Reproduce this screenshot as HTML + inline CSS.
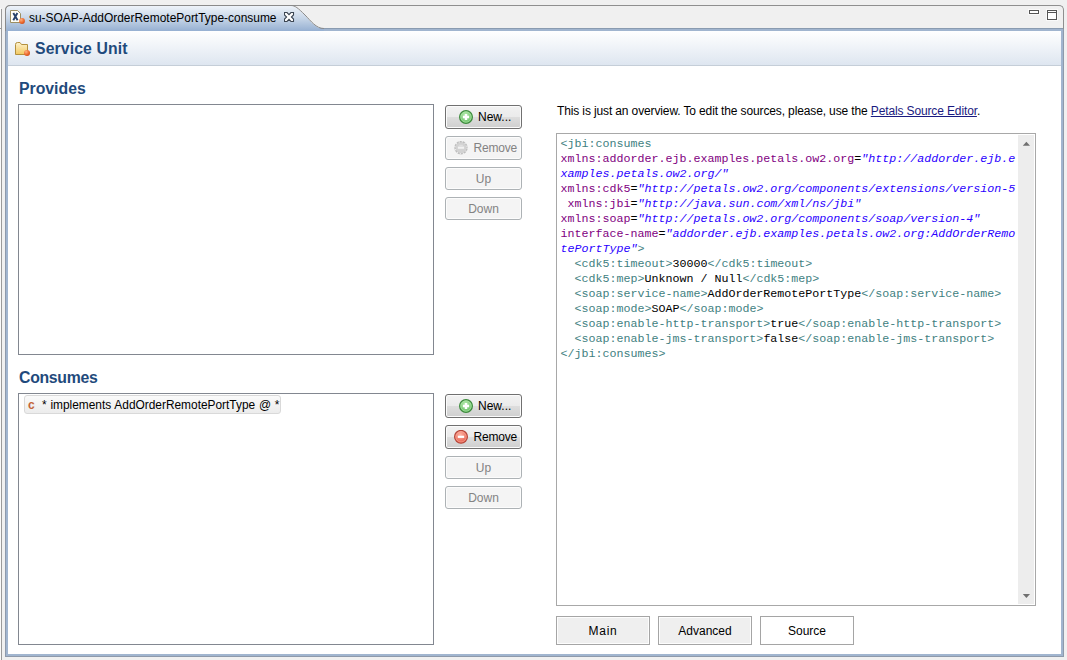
<!DOCTYPE html>
<html><head><meta charset="utf-8">
<style>
*{box-sizing:border-box;margin:0;padding:0}
html,body{width:1067px;height:660px;overflow:hidden;background:#f0f0f0;font-family:"Liberation Sans",sans-serif;position:relative}
.a{position:absolute}
.t{position:absolute;white-space:pre;font-family:"Liberation Sans",sans-serif;color:#000}
.btn{position:absolute;border:1px solid #707070;border-radius:3px;background:linear-gradient(#f2f2f2 0%,#ebebeb 48%,#dddddd 52%,#cfcfcf 100%);box-shadow:inset 0 0 0 1px #fbfbfb}
.btn.dis{border-color:#adb2b5;background:#f4f4f4;box-shadow:inset 0 0 0 1px #fcfcfc}
.bl{position:absolute;white-space:pre;font-size:12px;line-height:14px;color:#000}
.dis .bl{color:#838383}
.list{position:absolute;border:1px solid #828790;background:#fff}
.code{position:absolute;font-family:"Liberation Mono",monospace;font-size:11.67px;line-height:15px;white-space:pre;color:#000}
.tg{color:#3f7f7f}.an{color:#7f007f}.av{color:#2a00ff;font-style:italic}
.tab2{position:absolute;top:616px;width:94px;height:29px;border:1px solid #a5a5a5;background:#efefef;box-shadow:inset 0 0 0 1px #fdfdfd}
.tab2 span{position:absolute;left:0;right:0;top:7px;text-align:center;font-size:12px;line-height:14px;color:#000}
</style></head><body>

<svg width="0" height="0" style="position:absolute"><defs>
<radialGradient id="od" cx="0.35" cy="0.3" r="0.8"><stop offset="0" stop-color="#ffb080"/><stop offset="0.6" stop-color="#ec6a2c"/><stop offset="1" stop-color="#c8481a"/></radialGradient>
<radialGradient id="gg" cx="0.45" cy="0.35" r="0.7"><stop offset="0" stop-color="#b8ecb0"/><stop offset="1" stop-color="#5cb85a"/></radialGradient>
<radialGradient id="rg" cx="0.45" cy="0.35" r="0.7"><stop offset="0" stop-color="#ffb4a4"/><stop offset="1" stop-color="#e2503e"/></radialGradient>
<linearGradient id="fd" x1="0" y1="0" x2="0" y2="1"><stop offset="0" stop-color="#fdf3cf"/><stop offset="1" stop-color="#f2c860"/></linearGradient>
</defs></svg>
<!-- left neighbour edge -->
<div class="a" style="left:0;top:8px;width:1px;height:652px;background:#fafafa"></div>
<div class="a" style="left:1px;top:9px;width:1px;height:651px;background:#9a9a9a"></div>
<div class="a" style="left:0;top:28px;width:1px;height:1px;background:#9a9a9a"></div>

<!-- folder frame -->
<div class="a" style="left:5px;top:5px;width:1059px;height:652px;border:1px solid #8f8f8f;border-bottom-color:#8e9aab;border-radius:5px 5px 0 0;background:#f0f0f0"></div>
<div class="a" style="left:5px;top:29px;width:1px;height:628px;background:#8e9aab"></div><div class="a" style="left:1063px;top:29px;width:1px;height:628px;background:#8e9aab"></div>
<div class="a" style="left:6px;top:28px;width:1057px;height:1px;background:#8a9bb0"></div>
<div class="a" style="left:6px;top:29px;width:1057px;height:627px;background:#a1b5cf"></div>
<div class="a" style="left:8px;top:31px;width:1053px;height:623px;background:#fff"></div>

<!-- selected tab -->
<svg class="a" style="left:0;top:0" width="400" height="32">
<defs><linearGradient id="tg" x1="0" y1="0" x2="0" y2="1">
<stop offset="0" stop-color="#eef3f9"/><stop offset="0.5" stop-color="#c6d5e7"/><stop offset="1" stop-color="#96b0d2"/></linearGradient></defs>
<path d="M6,31 L6,11 Q6,6 11,6 L291,6 C295,6 298,8.5 305,15.5 C311,21.5 316,29 324,29 L324,31 Z" fill="url(#tg)"/>
<path d="M5.5,31 L5.5,10.5 Q5.5,5.5 10.5,5.5 L291,5.5 C295,5.5 298,8 305,15 C311,21 316,28.5 324,28.5" fill="none" stroke="#8a8a8a" stroke-width="1"/>
</svg>
<!-- tab icon -->
<svg class="a" style="left:9px;top:9px" width="18" height="17">
<path d="M1.5,1.5 L8.5,1.5 L11.5,4.5 L11.5,13.5 L1.5,13.5 Z" fill="#fffef6" stroke="#9c8f62"/>
<path d="M4.3,4 L8.6,11.2 M8.4,4 L4.3,11.2" stroke="#27416a" stroke-width="1.9"/>
<circle cx="13" cy="12" r="2.9" fill="url(#od)"/>
</svg>
<div class="t" style="left:29px;top:10px;font-size:11.95px;line-height:16px">su-SOAP-AddOrderRemotePortType-consume</div>
<!-- close X -->
<svg class="a" style="left:284px;top:12px" width="11" height="11">
<path d="M0.5,0.5 L3,0.5 L5,2.6 L7,0.5 L9.5,0.5 L9.5,3 L7.4,5 L9.5,7 L9.5,9.5 L7,9.5 L5,7.4 L3,9.5 L0.5,9.5 L0.5,7 L2.6,5 L0.5,3 Z" fill="#fff" stroke="#3c4652" stroke-width="1.1"/>
</svg>
<!-- min / max -->
<div class="a" style="left:1029px;top:10px;width:10px;height:4px;border:1px solid #555;background:#fff;box-shadow:0 0 0 1px rgba(255,255,255,.6)"></div>
<div class="a" style="left:1047px;top:10px;width:10px;height:10px;border:1px solid #555;background:#fff;box-shadow:0 0 0 1px rgba(255,255,255,.6)"></div><div class="a" style="left:1048px;top:12px;width:8px;height:1px;background:#555"></div>

<!-- header -->
<div class="a" style="left:8px;top:31px;width:1053px;height:34px;background:linear-gradient(#ffffff,#dee6f0)"></div>
<div class="a" style="left:8px;top:65px;width:1053px;height:1px;background:#c5ced8"></div>
<svg class="a" style="left:14px;top:41px" width="18" height="17">
<path d="M1.5,3.5 Q1.5,1.5 3.5,1.5 L6,1.5 L7.5,3.5 L13.5,3.5 L13.5,13.5 L1.5,13.5 Z" fill="url(#fd)" stroke="#b3903e"/>
<circle cx="13" cy="12" r="3" fill="url(#od)"/>
</svg>
<div class="t" style="left:35px;top:39.5px;font-size:15.8px;line-height:18px;letter-spacing:0.1px;font-weight:bold;color:#1f4a7c">Service Unit</div>

<!-- Provides -->
<div class="t" style="left:19px;top:79.5px;font-size:15.8px;line-height:18px;letter-spacing:0px;font-weight:bold;color:#1f4a7c">Provides</div>
<div class="list" style="left:18px;top:104px;width:416px;height:251px"></div>

<div class="btn" style="left:445px;top:105px;width:77px;height:24px">
<svg class="a" style="left:13px;top:4px" width="16" height="16"><circle cx="7" cy="7" r="6.4" fill="url(#gg)" stroke="#3f8a3f" stroke-width="1.2"/><circle cx="7" cy="7" r="5.2" fill="none" stroke="#b8ecb0" stroke-width="0.8" opacity="0.7"/><path d="M3.9,7 H10.1 M7,3.9 V10.1" stroke="#fff" stroke-width="2.4"/></svg>
<div class="bl" style="left:32px;top:4px">New...</div></div>
<div class="btn dis" style="left:445px;top:136px;width:77px;height:24px">
<svg class="a" style="left:8px;top:4px" width="16" height="16"><circle cx="7" cy="6.7" r="6.1" fill="#d2d2d2" stroke="#bdbdbd" stroke-width="1.3"/><circle cx="7" cy="6.7" r="6.1" fill="none" stroke="#f4f4f4" stroke-width="1.4" stroke-dasharray="1 2.2"/><path d="M3.9,6.7 H10.1" stroke="#f2f2f2" stroke-width="2.2"/><path d="M5.2,4.3 H8.8" stroke="#e4e4e4" stroke-width="0.9"/></svg>
<div class="bl" style="left:27.5px;top:4px;letter-spacing:-0.22px">Remove</div></div>
<div class="btn dis" style="left:445px;top:167px;width:77px;height:23px"><div class="bl" style="left:0;right:0;text-align:center;top:4px">Up</div></div>
<div class="btn dis" style="left:445px;top:197px;width:77px;height:23px"><div class="bl" style="left:0;right:0;text-align:center;top:4px">Down</div></div>

<!-- Consumes -->
<div class="t" style="left:19px;top:368.5px;font-size:15.8px;line-height:18px;letter-spacing:-0.28px;font-weight:bold;color:#1f4a7c">Consumes</div>
<div class="list" style="left:18px;top:393px;width:416px;height:252px"></div>
<div class="a" style="left:24px;top:395px;width:257px;height:19px;border:1px solid #d9d9d9;border-radius:3px;background:linear-gradient(#fafafa,#ececec)"></div>
<div class="t" style="left:28px;top:398px;font-size:12px;line-height:14px;font-weight:bold;color:#c4643a">c</div>
<div class="t" style="left:42px;top:398px;font-size:11.9px;word-spacing:0.5px;line-height:14px">* implements AddOrderRemotePortType @ *</div>

<div class="btn" style="left:445px;top:394px;width:77px;height:24px">
<svg class="a" style="left:13px;top:4px" width="16" height="16"><circle cx="7" cy="7" r="6.4" fill="url(#gg)" stroke="#3f8a3f" stroke-width="1.2"/><circle cx="7" cy="7" r="5.2" fill="none" stroke="#b8ecb0" stroke-width="0.8" opacity="0.7"/><path d="M3.9,7 H10.1 M7,3.9 V10.1" stroke="#fff" stroke-width="2.4"/></svg>
<div class="bl" style="left:32px;top:4px">New...</div></div>
<div class="btn" style="left:445px;top:425px;width:77px;height:24px">
<svg class="a" style="left:8px;top:4px" width="16" height="16"><circle cx="7" cy="6.8" r="6.4" fill="url(#rg)" stroke="#b4463a" stroke-width="1.2"/><circle cx="7" cy="6.8" r="5.2" fill="none" stroke="#ffc0b0" stroke-width="0.8" opacity="0.6"/><path d="M3.8,6.8 H10.2" stroke="#fff" stroke-width="2.2"/></svg>
<div class="bl" style="left:27.5px;top:4px;letter-spacing:-0.22px">Remove</div></div>
<div class="btn dis" style="left:445px;top:456px;width:77px;height:23px"><div class="bl" style="left:0;right:0;text-align:center;top:4px">Up</div></div>
<div class="btn dis" style="left:445px;top:486px;width:77px;height:23px"><div class="bl" style="left:0;right:0;text-align:center;top:4px">Down</div></div>

<!-- right side -->
<div class="t" style="left:557px;top:104px;font-size:12px;letter-spacing:-0.13px;line-height:14px">This is just an overview. To edit the sources, please, use the <span style="color:#1a1a80;text-decoration:underline">Petals Source Editor</span>.</div>

<div class="a" style="left:556px;top:133px;width:480px;height:473px;border:1px solid #a8a8a8;background:#fff"></div>
<div class="a" style="left:1018px;top:135px;width:16px;height:469px;background:#ededed"></div>
<svg class="a" style="left:1018px;top:135px" width="16" height="469">
<path d="M4.8,10.8 L8.4,6.8 L12,10.8 Z" fill="#707070"/>
<path d="M4.8,459 L12,459 L8.4,463 Z" fill="#707070"/>
</svg>

<div class="code" style="left:560.5px;top:136.7px"><span class="tg">&lt;jbi:consumes</span>
<span class="an">xmlns:addorder.ejb.examples.petals.ow2.org</span>=<span class="av">"http://addorder.ejb.e</span>
<span class="av">xamples.petals.ow2.org/"</span>
<span class="an">xmlns:cdk5</span>=<span class="av">"http://petals.ow2.org/components/extensions/version-5</span>
 <span class="an">xmlns:jbi</span>=<span class="av">"http://java.sun.com/xml/ns/jbi"</span>
<span class="an">xmlns:soap</span>=<span class="av">"http://petals.ow2.org/components/soap/version-4"</span>
<span class="an">interface-name</span>=<span class="av">"addorder.ejb.examples.petals.ow2.org:AddOrderRemo</span>
<span class="av">tePortType"</span><span class="tg">&gt;</span>
  <span class="tg">&lt;cdk5:timeout&gt;</span>30000<span class="tg">&lt;/cdk5:timeout&gt;</span>
  <span class="tg">&lt;cdk5:mep&gt;</span>Unknown / Null<span class="tg">&lt;/cdk5:mep&gt;</span>
  <span class="tg">&lt;soap:service-name&gt;</span>AddOrderRemotePortType<span class="tg">&lt;/soap:service-name&gt;</span>
  <span class="tg">&lt;soap:mode&gt;</span>SOAP<span class="tg">&lt;/soap:mode&gt;</span>
  <span class="tg">&lt;soap:enable-http-transport&gt;</span>true<span class="tg">&lt;/soap:enable-http-transport&gt;</span>
  <span class="tg">&lt;soap:enable-jms-transport&gt;</span>false<span class="tg">&lt;/soap:enable-jms-transport&gt;</span>
<span class="tg">&lt;/jbi:consumes&gt;</span></div>

<div class="tab2" style="left:556px"><span style="letter-spacing:0.7px">Main</span></div>
<div class="tab2" style="left:658px"><span>Advanced</span></div>
<div class="tab2" style="left:760px;background:#fff;box-shadow:none"><span>Source</span></div>

</body></html>
